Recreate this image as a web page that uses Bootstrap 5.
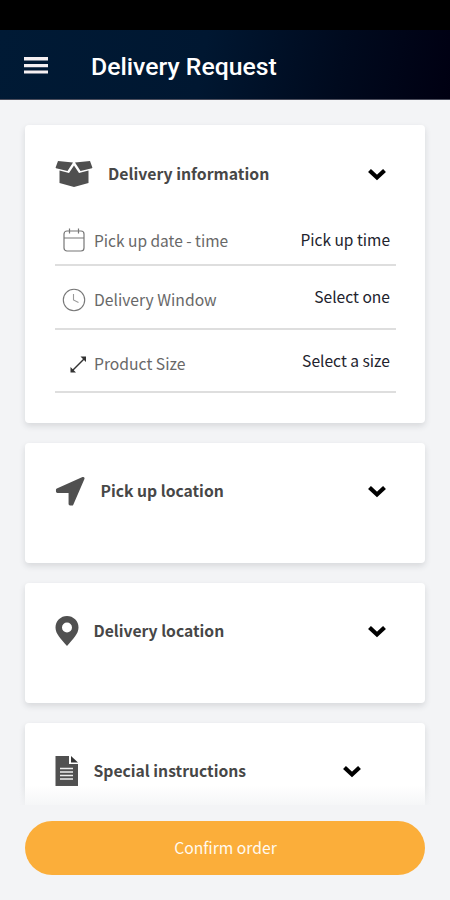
<!DOCTYPE html>
<html lang="en">
<head>
<meta charset="utf-8">
<meta name="viewport" content="width=device-width, initial-scale=1">
<title>Delivery Request</title>
<link href="https://cdn.jsdelivr.net/npm/bootstrap@5.3.0/dist/css/bootstrap.min.css" rel="stylesheet">
<style>
  body { height: 900px; background: #f3f4f6; font-family: "Noto Sans CJK SC", "Open Sans", sans-serif; overflow: hidden; }
  .status-strip { height: 30px; background: #000; }
  .app-header { height: 70px; padding: 0 24px; background: linear-gradient(100deg, #001a35 0%, #001731 45%, #000a1e 75%, #000012 100%); border-bottom: 1px solid #4a4c5b; }
  .menu-btn { width: 24px; height: 20px; }
  .app-title { margin: 4px 0 0 43px; font: 500 24.8px/30px Roboto, sans-serif; color: #fff; }
  .viewport-area { height: 705px; padding: 25px 25px 0; gap: 20px; overflow: hidden; }
  .panel { background: #fff; border: 0; border-radius: 4px; height: 120px; flex: none; padding: 18px 29px 0 30px; box-shadow: 0 3px 6px rgba(40,50,60,.14); }
  .panel-tall { height: 298px; padding-top: 19px; }
  .panel-head { height: 60px; color: #474747; }
  .panel-title { font-size: 15.7px; font-weight: 700; line-height: 24px; margin: 0 0 0 14.5px; }
  .panel-tall .panel-title { font-size: 15.8px; margin-top: -1px; margin-left: 15px; }
  .chev { margin-right: 9px; }
  .chev-inset { margin-right: 34px; }
  .field-row { height: 63.5px; border-bottom: 2px solid #dedede; width: 341px; padding: 22px 6px 0 7px; font-size: 15.7px; line-height: 24px; color: #686868; }
  .field-first { height: 62px; padding-top: 24px; font-size: 15.5px; }
  .field-icon { width: 24px; height: 24px; margin-right: 8px; flex: none; }
  .field-value { color: #22232d; margin-top: -4px; font-size: 15.6px; }
  .field-first .field-value { margin-top: -1px; font-size: 15.5px; }
  .action-bar { height: 115px; margin-top: -20px; padding: 36px 25px 0; position: relative; background: linear-gradient(rgba(243,244,246,0), #f3f4f6 25px); }
  .confirm-btn, .confirm-btn:hover { height: 54px; background: #fbae3a; color: #fffaf0; border: 0; font-size: 15.7px; line-height: 24px; padding: 0 0 0 1px; }
</style>
<script src="https://cdn.jsdelivr.net/npm/bootstrap@5.3.0/dist/js/bootstrap.bundle.min.js"></script>
</head>
<body>
<div class="status-strip"></div>
<header class="app-header d-flex align-items-center">
  <svg class="menu-btn" viewBox="0 0 24 20" fill="#f5f0f2"><path d="M0 2h24v3.500H0zM0 9h24v3.200H0zM0 15.500h24v3H0z"/></svg>
  <h1 class="app-title">Delivery Request</h1>
</header>
<main class="viewport-area d-flex flex-column">
  <section class="card panel panel-tall">
    <div class="panel-head d-flex align-items-center">
      <svg width="38" height="28" viewBox="0 0 38 28" fill="#505050"><path d="M3 1 18 2.500 12.500 11 1 8.300Q.3 8 .8 7zM35 1 20 2.500 25.500 11 37 8.300Q37.700 8 37.200 7z"/><path d="M4.500 10.500 14 13 19 5.500 24 13 33.500 10.500V23L19 27 4.500 23z"/></svg>
      <h2 class="panel-title">Delivery information</h2>
      <svg class="chev ms-auto" width="20" height="14" viewBox="0 0 20 14" fill="none" stroke="#000" stroke-width="4.200"><path d="m2.500 3.500 7.500 7 7.500-7"/></svg>
    </div>
    <div class="field-row field-first d-flex align-items-start">
      <svg class="field-icon" viewBox="0 0 24 24" fill="none" stroke="#777" stroke-width="1.200"><rect x="2" y="3" width="20" height="20" rx="3"/><path d="M2 10h20M7.500.5v5M16.500.5v5"/></svg>
      <span>Pick up date - time</span><span class="field-value ms-auto">Pick up time</span>
    </div>
    <div class="field-row d-flex align-items-start">
      <svg class="field-icon" viewBox="0 0 24 24" fill="none" stroke="#777" stroke-width="1.100"><circle cx="12" cy="12" r="10.700"/><path d="M11.500 6v6l5 2.500" stroke="#999"/></svg>
      <span>Delivery Window</span><span class="field-value ms-auto">Select one</span>
    </div>
    <div class="field-row d-flex align-items-start">
      <svg class="field-icon" viewBox="0 0 24 24" fill="#333"><path d="m10 19 12-12" stroke="#333" stroke-width="1.500"/><path d="M18.500 4.500H24V10zM8.500 15V20.500H14z"/></svg>
      <span>Product Size</span><span class="field-value ms-auto">Select a size</span>
    </div>
  </section>
  <section class="card panel">
    <div class="panel-head d-flex align-items-center">
      <svg width="31" height="31" viewBox="0 0 32 32" fill="#505050" stroke="#505050" stroke-width="3" stroke-linejoin="round"><path d="M29 2.500 17.500 29h-2V16H2.500v-1.800z"/></svg>
      <h2 class="panel-title">Pick up location</h2>
      <svg class="chev ms-auto" width="20" height="14" viewBox="0 0 20 14" fill="none" stroke="#000" stroke-width="4.200"><path d="m2.500 3.500 7.500 7 7.500-7"/></svg>
    </div>
  </section>
  <section class="card panel">
    <div class="panel-head d-flex align-items-center">
      <svg width="24" height="30" viewBox="0 0 24 30"><path fill="#505050" fill-rule="evenodd" d="M12 0a11.500 11.500 0 0 1 11.500 11.500C23.500 18 18 23 12 30 6 23 .5 18 .5 11.500A11.500 11.500 0 0 1 12 0zm0 6.500a5 5 0 1 0 0 10 5 5 0 0 0 0-10z"/></svg>
      <h2 class="panel-title">Delivery location</h2>
      <svg class="chev ms-auto" width="20" height="14" viewBox="0 0 20 14" fill="none" stroke="#000" stroke-width="4.200"><path d="m2.500 3.500 7.500 7 7.500-7"/></svg>
    </div>
  </section>
  <section class="card panel">
    <div class="panel-head d-flex align-items-center">
      <svg width="24" height="30" viewBox="0 0 24 30"><path fill="#505050" d="M.5 0H14v8h9v22H.5z"/><path fill="#333" d="M16 0l7 6.500h-7z"/><path d="M5 12.500h13M5 16h13M5 19.500h13M5 23h13" stroke="#eee" stroke-width="1.700"/></svg>
      <h2 class="panel-title">Special instructions</h2>
      <svg class="chev chev-inset ms-auto" width="20" height="14" viewBox="0 0 20 14" fill="none" stroke="#000" stroke-width="4.200"><path d="m2.500 3.500 7.500 7 7.500-7"/></svg>
    </div>
  </section>
</main>
<footer class="action-bar">
  <button class="btn confirm-btn rounded-pill w-100" type="button">Confirm order</button>
</footer>
</body>
</html>
